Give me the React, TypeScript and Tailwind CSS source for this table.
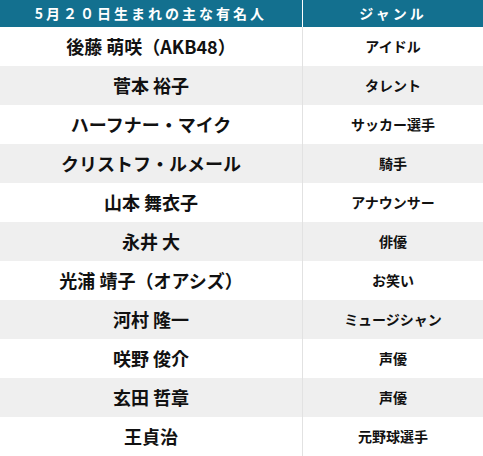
import React from "react";

const rows: [string, string][] = [
  ["後藤 萌咲（AKB48）", "アイドル"],
  ["菅本 裕子", "タレント"],
  ["ハーフナー・マイク", "サッカー選手"],
  ["クリストフ・ルメール", "騎手"],
  ["山本 舞衣子", "アナウンサー"],
  ["永井 大", "俳優"],
  ["光浦 靖子（オアシズ）", "お笑い"],
  ["河村 隆一", "ミュージシャン"],
  ["咲野 俊介", "声優"],
  ["玄田 哲章", "声優"],
  ["王貞治", "元野球選手"],
];

export default function App() {
  return (
    <div
      className="w-[483px] h-[456px] bg-white overflow-hidden text-[#111]"
      style={{ fontFamily: '"Noto Sans CJK JP", "Noto Sans", sans-serif' }}
    >
      <div className="flex h-[27px] bg-[#13708f] text-white font-bold text-[14px]">
        <div className="w-[303px] flex items-center justify-center tracking-[3px] border-r border-white">
          5月２０日生まれの主な有名人
        </div>
        <div className="flex-1 flex items-center justify-center tracking-[3px]">
          ジャンル
        </div>
      </div>
      {rows.map(([name, genre], i) => (
        <div
          key={i}
          className={`flex h-[39px] ${i % 2 === 1 ? "bg-[#efefef]" : "bg-white"}`}
        >
          <div className="w-[303px] flex items-center justify-center border-r border-[#e2e2e2] font-bold text-[18px]">
            {name}
          </div>
          <div className="flex-1 flex items-center justify-center font-bold text-[14px]">
            {genre}
          </div>
        </div>
      ))}
    </div>
  );
}
